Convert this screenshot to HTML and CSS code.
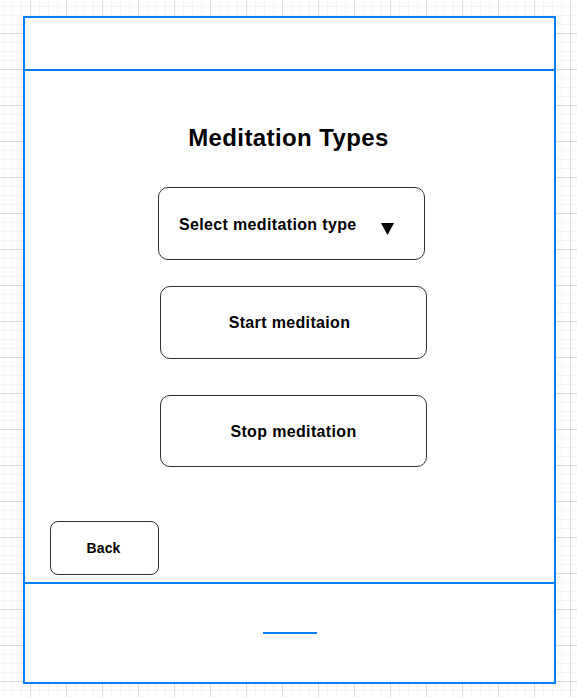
FILE: index.html
```html
<!DOCTYPE html>
<html lang="en">
<head>
<meta charset="utf-8">
<title>Meditation Types</title>
<link rel="stylesheet" href="styles.css">
</head>
<body>
  <div class="frame">
    <header class="frame-header"></header>
    <main class="frame-main">
      <h1 class="title">Meditation Types</h1>
      <div class="box dropdown">
        <span class="dropdown-label">Select meditation type</span>
        <svg class="dropdown-arrow" width="13" height="12" viewBox="0 0 13 12"><polygon points="0,0 13,0 6.5,12" fill="#000"/></svg>
      </div>
      <div class="box action start">Start meditaion</div>
      <div class="box action stop">Stop meditation</div>
      <div class="box back">Back</div>
    </main>
    <footer class="frame-footer">
      <div class="footer-line"></div>
    </footer>
  </div>
</body>
</html>
```

FILE: styles.css
```css
html, body {
  margin: 0;
  padding: 0;
}

body {
  width: 577px;
  height: 697px;
  overflow: hidden;
  font-family: "Liberation Sans", Arial, sans-serif;
  background-color: #ffffff;
  background-image:
    linear-gradient(to right, #dcdcdc 1px, transparent 1px),
    linear-gradient(to bottom, #dcdcdc 1px, transparent 1px),
    linear-gradient(to right, #f3f3f3 1px, transparent 1px),
    linear-gradient(to bottom, #f3f3f3 1px, transparent 1px);
  background-size: 36px 36px, 36px 36px, 9px 9px, 9px 9px;
  background-position: 30px 0, 0 33px, 3px 0, 0 6px;
}

.frame {
  box-sizing: border-box;
  margin: 16px 0 0 23px;
  width: 533px;
  height: 668px;
  border: 2px solid #007fff;
  background: #ffffff;
  display: flex;
  flex-direction: column;
}

.frame-header {
  height: 51px;
  border-bottom: 2px solid #007fff;
  flex: none;
}

.frame-main {
  height: 511px;
  flex: none;
  display: flex;
  flex-direction: column;
  align-items: flex-start;
  padding-top: 53px;
  box-sizing: border-box;
}

.title {
  margin: 0;
  align-self: stretch;
  text-align: center;
  font-size: 24px;
  line-height: 28px;
  font-weight: bold;
  letter-spacing: 0.4px;
  color: #000;
  padding-right: 2px;
}

.box {
  box-sizing: border-box;
  border: 1px solid #333333;
  border-radius: 10px;
  background: #ffffff;
  color: #000;
  font-weight: bold;
  display: flex;
  align-items: center;
}

.dropdown {
  margin: 35px 0 0 133px;
  width: 267px;
  height: 73px;
  padding: 0 30px 0 20px;
  justify-content: space-between;
  font-size: 16px;
  letter-spacing: 0.35px;
}

.dropdown-label {
  margin-top: 2px;
}

.dropdown-arrow {
  margin-top: 11px;
}

.action {
  width: 267px;
  height: 73px;
  justify-content: center;
  font-size: 16px;
  letter-spacing: 0.35px;
  padding-top: 1px;
}

.start {
  margin: 26px 0 0 135px;
  padding-right: 8px;
}

.stop {
  margin: 36px 0 0 135px;
  height: 72px;
  padding-top: 2px;
}

.back {
  margin: 54px 0 0 25px;
  width: 109px;
  height: 54px;
  border-radius: 8px;
  justify-content: center;
  font-size: 14px;
  letter-spacing: 0.1px;
  padding-right: 2px;
}

.frame-footer {
  flex: 1;
  border-top: 2px solid #007fff;
  display: flex;
  justify-content: center;
  align-items: flex-start;
  padding-top: 48px;
}

.footer-line {
  width: 54px;
  height: 2px;
  background: #007fff;
}
```
